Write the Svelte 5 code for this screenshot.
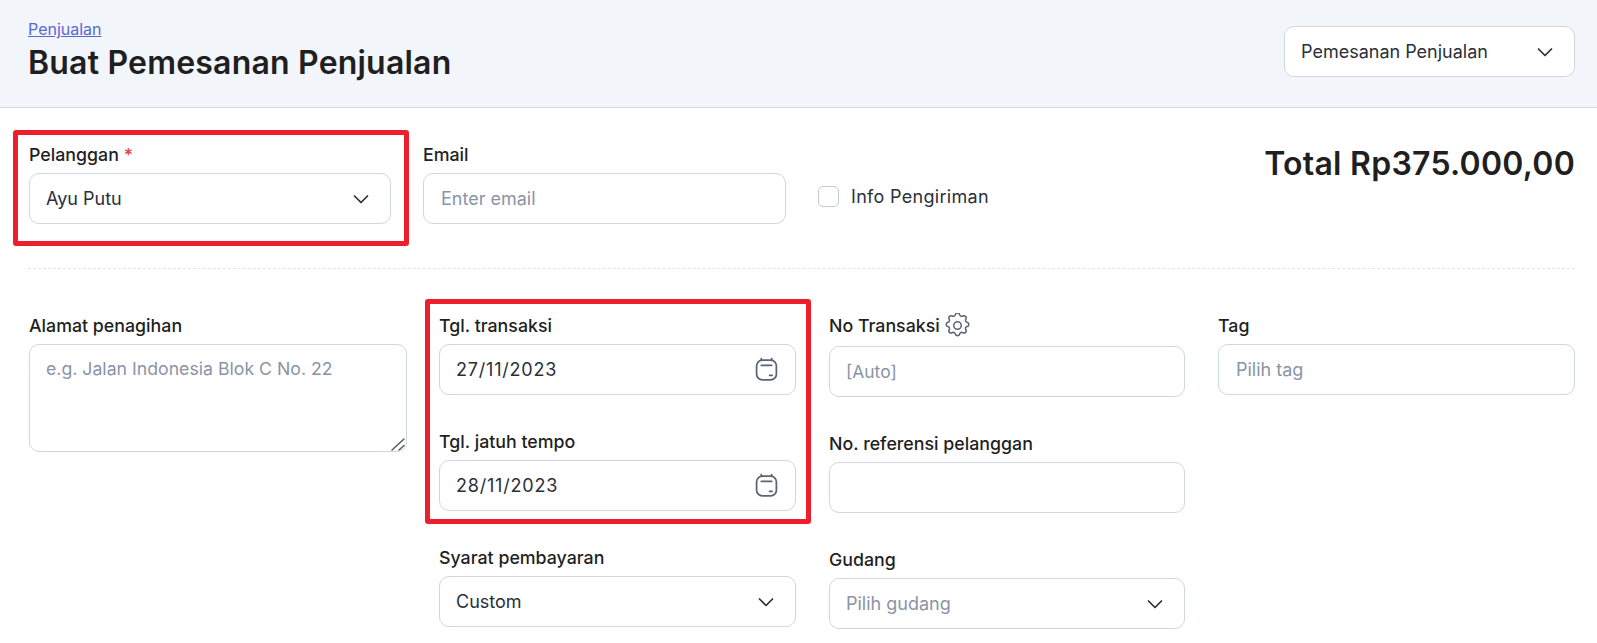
<script>
  const today = '27/11/2023';
  const due = '28/11/2023';
</script>

{#snippet chevron()}
  <svg class="chev" viewBox="0 0 24 24" width="24" height="24" fill="none" stroke="currentColor" stroke-width="1.7" stroke-linecap="round" stroke-linejoin="round"><path d="M5.5 9l6.5 6.5L18.5 9" /></svg>
{/snippet}

{#snippet calendar()}
  <svg class="cal" viewBox="0 0 24 24" width="25" height="25" fill="none" stroke="#5b6472" stroke-width="1.7" stroke-linecap="round">
    <rect x="2.5" y="3" width="19" height="19" rx="5.5" />
    <path d="M7 1.6v1.6M17 1.6v1.6M7 8h10M15 17.6h2.4" />
  </svg>
{/snippet}

<header class="top">
  <div>
    <a class="crumb" href="#penjualan">Penjualan</a>
    <h1>Buat Pemesanan Penjualan</h1>
  </div>
  <div class="type">
    <div class="control"><span>Pemesanan Penjualan</span>{@render chevron()}</div>
  </div>
</header>

<main class="form">
  <section class="row-one">
    <div class="field">
      <span class="label">Pelanggan <i>*</i></span>
      <div class="control"><span>Ayu Putu</span>{@render chevron()}</div>
    </div>
    <div class="field">
      <span class="label">Email</span>
      <input class="control" placeholder="Enter email" />
    </div>
    <label class="ship"><span class="box"></span>Info Pengiriman</label>
    <div class="total">Total Rp375.000,00</div>
  </section>

  <hr />

  <section class="row-two">
    <div class="col">
      <div class="field area">
        <span class="label">Alamat penagihan</span>
        <textarea placeholder="e.g. Jalan Indonesia Blok C No. 22"></textarea>
        <svg class="grip" viewBox="0 0 14 14" width="14" height="14" fill="none" stroke="#555b66" stroke-width="1.5" stroke-linecap="round">
          <path d="M1 13L13 2M8 13l5-4.5" />
        </svg>
      </div>
    </div>
    <div class="col">
      <div class="field">
        <span class="label">Tgl. transaksi</span>
        <div class="control"><span class="date">{today}</span>{@render calendar()}</div>
      </div>
      <div class="field">
        <span class="label">Tgl. jatuh tempo</span>
        <div class="control"><span class="date">{due}</span>{@render calendar()}</div>
      </div>
      <div class="field">
        <span class="label">Syarat pembayaran</span>
        <div class="control"><span>Custom</span>{@render chevron()}</div>
      </div>
    </div>
    <div class="col">
      <div class="field">
        <span class="label tall">No Transaksi
          <svg viewBox="2 2 20 20" width="25" height="25" fill="none" stroke="#5b6472" stroke-width="1.2" stroke-linejoin="round">
            <path d="M10.3 3.3c.4-1.7 3-1.7 3.4 0a1.7 1.7 0 0 0 2.6 1.1c1.5-.9 3.3.9 2.4 2.4a1.7 1.7 0 0 0 1 2.6c1.8.4 1.8 3 0 3.4a1.7 1.7 0 0 0-1 2.6c.9 1.5-.9 3.3-2.4 2.4a1.7 1.7 0 0 0-2.6 1c-.4 1.8-3 1.8-3.4 0a1.7 1.7 0 0 0-2.6-1c-1.5.9-3.3-.9-2.4-2.4a1.7 1.7 0 0 0-1-2.6c-1.8-.4-1.8-3 0-3.4a1.7 1.7 0 0 0 1-2.6c-.9-1.5.9-3.3 2.4-2.4a1.7 1.7 0 0 0 2.6-1.1z" />
            <circle cx="12" cy="12" r="3" />
          </svg>
        </span>
        <input class="control auto" placeholder="[Auto]" />
      </div>
      <div class="field">
        <span class="label">No. referensi pelanggan</span>
        <input class="control" />
      </div>
      <div class="field">
        <span class="label">Gudang</span>
        <div class="control"><span class="hint">Pilih gudang</span>{@render chevron()}</div>
      </div>
    </div>
    <div class="col">
      <div class="field">
        <span class="label">Tag</span>
        <input class="control" placeholder="Pilih tag" />
      </div>
    </div>
  </section>

  <div class="mark mark-one"></div>
  <div class="mark mark-two"></div>
</main>

<style>
:global(body) {
  margin: 0;
  background: #fff;
  font-family: Inter, "Noto Sans", sans-serif;
  color: #1f1f1f;
  overflow: hidden;
}

.top {
  display: flex;
  justify-content: space-between;
  align-items: flex-start;
  box-sizing: border-box;
  height: 108px;
  padding: 19px 22px 0 28px;
  background: #f2f5fa;
  border-bottom: 1px solid #d3d8e2;
}
.crumb {
  display: block;
  font-size: 16px;
  line-height: 20px;
  color: #5a67d8;
}
h1 {
  margin: 4px 0 0;
  font-size: 32px;
  line-height: 40px;
  font-weight: 600;
  letter-spacing: 0.2px;
  white-space: nowrap;
  color: #1f1f1f;
}
.type {
  flex: none;
  width: 291px;
  margin-top: 7px;
}

.form {
  position: relative;
  padding: 0 22px 0 29px;
}

.control {
  display: flex;
  justify-content: space-between;
  align-items: center;
  box-sizing: border-box;
  width: 100%;
  height: 51px;
  padding: 0 16px;
  background: #fff;
  border: 1px solid #d0d5e0;
  border-radius: 10px;
  font: 18px Inter, "Noto Sans", sans-serif;
  color: #2a2f3a;
}
input.control {
  padding-left: 17px;
}
input.auto {
  padding-left: 16px;
  font-size: 17.4px;
}
.date {
  letter-spacing: 0.8px;
}
input::placeholder,
textarea::placeholder,
.hint {
  color: #8a94a6;
  opacity: 1;
}
.chev {
  color: #2a2f3a;
  flex: none;
  margin-right: 1px;
}
.cal {
  flex: none;
}

.label {
  display: flex;
  align-items: center;
  gap: 5px;
  height: 20px;
  margin-bottom: 9px;
  font-size: 17.8px;
  font-weight: 500;
  color: #1f1f1f;
}
.label i {
  color: #e0424b;
  font-style: normal;
}
.label.tall {
  margin-bottom: 11px;
}

.row-one {
  display: grid;
  grid-template-columns: 362px 363px auto 1fr;
  column-gap: 32px;
  height: 160px;
  padding-top: 36px;
  box-sizing: border-box;
}
.ship {
  display: flex;
  align-items: center;
  gap: 12px;
  height: 50px;
  margin-top: 27px;
  font-size: 18px;
  letter-spacing: 0.3px;
  color: #2a2f3a;
}
.box {
  box-sizing: border-box;
  width: 21px;
  height: 21px;
  border: 1.5px solid #c3c9d6;
  border-radius: 5px;
}
.total {
  text-align: right;
  font-size: 32px;
  line-height: 40px;
  font-weight: 600;
  letter-spacing: 0.25px;
}

hr {
  margin: 0 0 0 -1px;
  border: 0;
  border-top: 1px dashed #dfe3ea;
}

.row-two {
  display: grid;
  grid-template-columns: 378px 356px 356px 357px;
  column-gap: 33px;
  padding-top: 46px;
}
.col {
  display: flex;
  flex-direction: column;
  gap: 36px;
}
.col:nth-child(2) {
  margin-left: -1px;
}
.area {
  position: relative;
}
.grip {
  position: absolute;
  right: 2px;
  bottom: 1px;
  pointer-events: none;
}
textarea {
  display: block;
  box-sizing: border-box;
  width: 100%;
  height: 108px;
  padding: 12px 16px;
  border: 1px solid #d0d5e0;
  border-radius: 10px;
  font: 17.7px/24px Inter, "Noto Sans", sans-serif;
  resize: none;
  outline: none;
}

/* red call-outs drawn on top of the form */
.mark {
  position: absolute;
  box-sizing: border-box;
  border: 5px solid #ee1f2d;
  border-radius: 3px;
  pointer-events: none;
}
.mark-one {
  left: 13px;
  top: 22px;
  width: 396px;
  height: 116px;
}
.mark-two {
  left: 425px;
  top: 191px;
  width: 386px;
  height: 225px;
}
</style>
